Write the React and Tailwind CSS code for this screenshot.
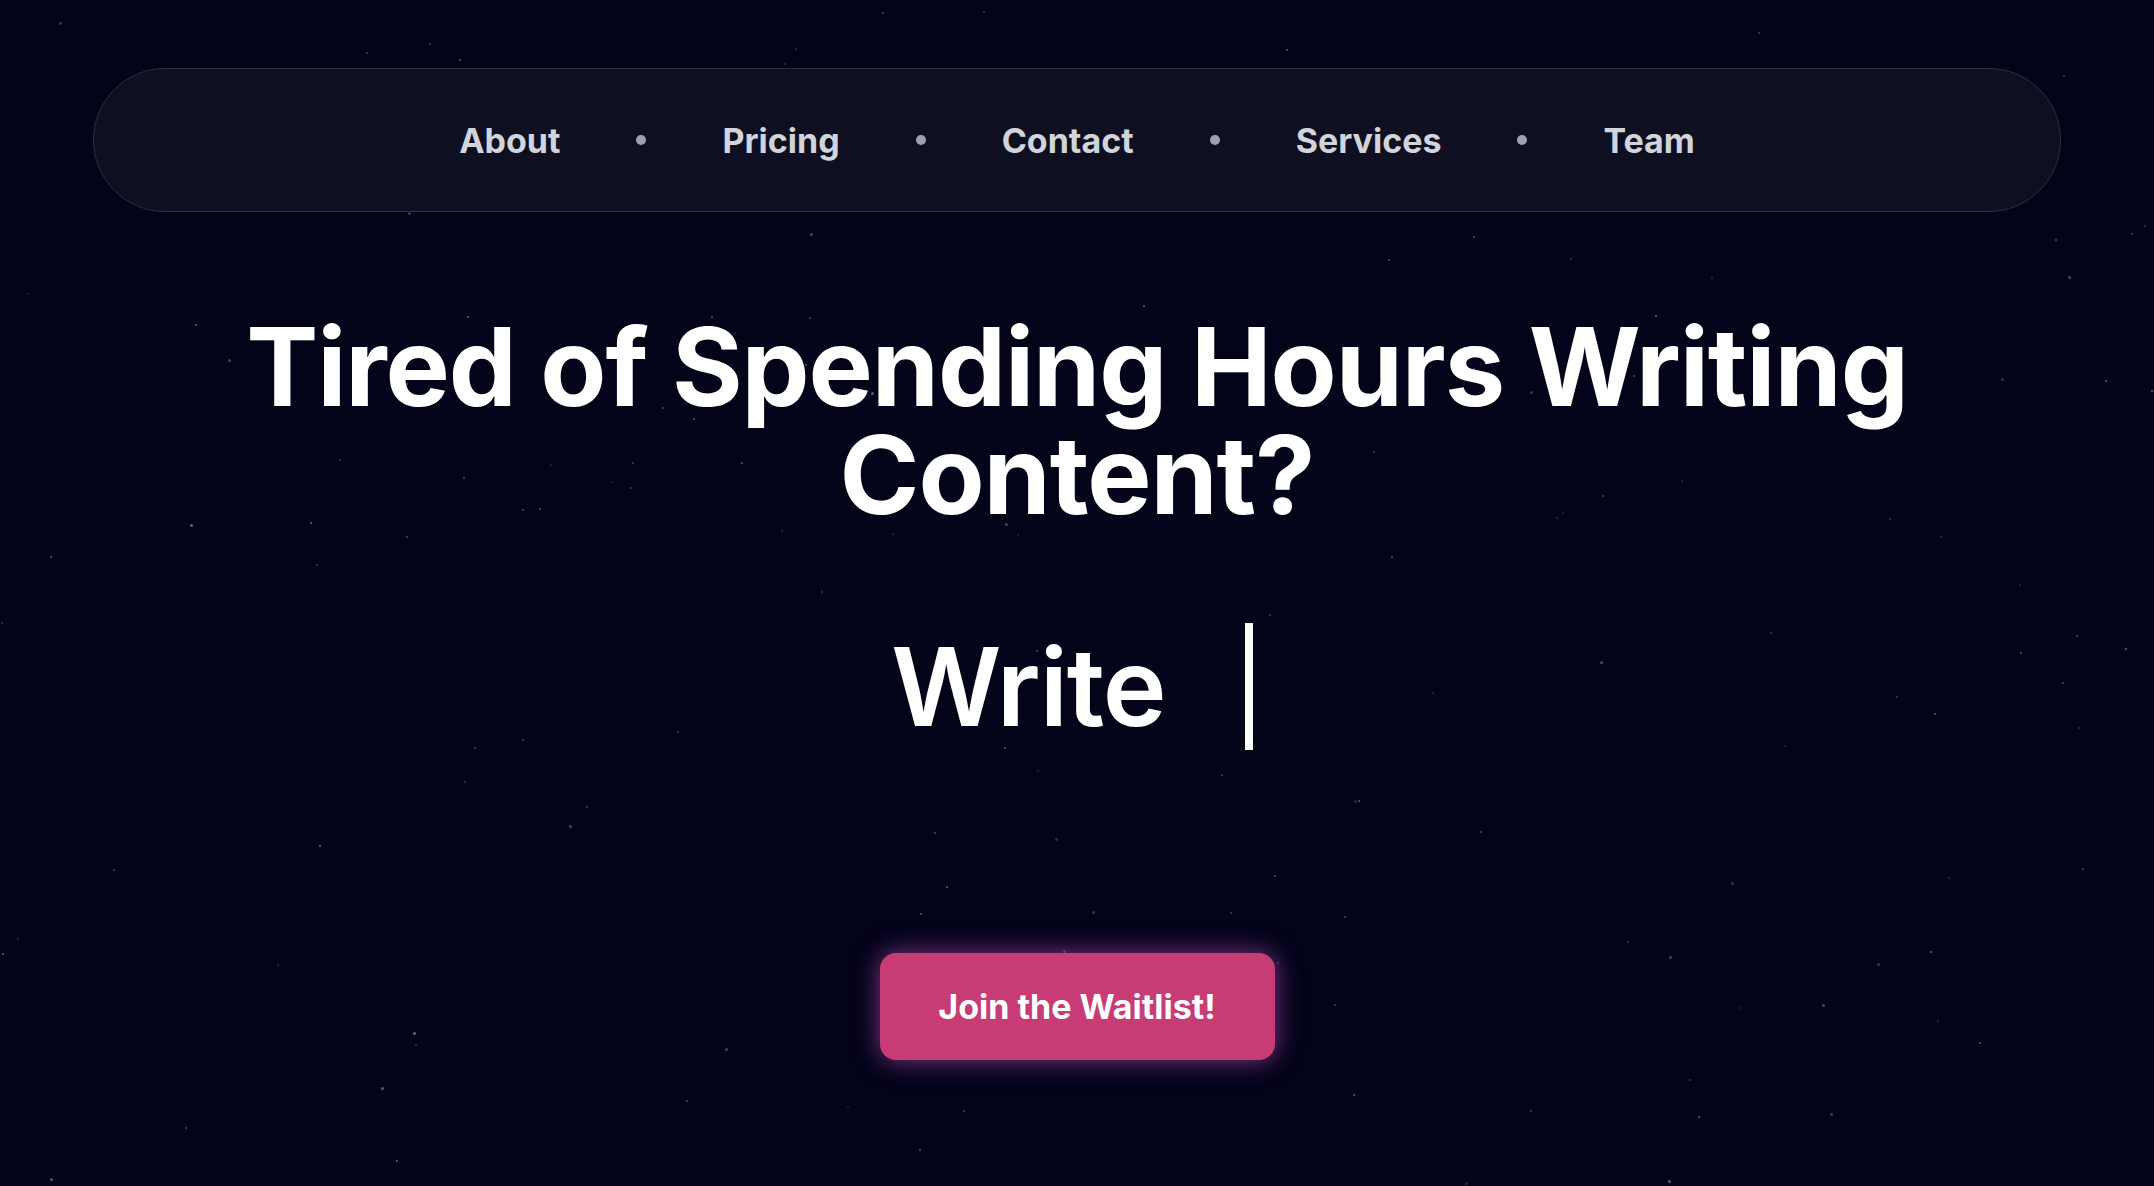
const links = ["About", "Pricing", "Contact", "Services", "Team"];

// deterministic star field
const makeStars = (count) => {
  let seed = 42;
  const rand = () => {
    seed = (seed * 16807) % 2147483647;
    return (seed - 1) / 2147483646;
  };
  return Array.from({ length: count }, () => ({
    left: rand() * 100,
    top: rand() * 100,
    size: rand() < 0.8 ? 2 : 3,
    opacity: 0.2 + rand() * 0.45,
  }));
};

const stars = makeStars(170);

const Navbar = () => (
  <nav className="mx-[93px] mt-[68px] h-[144px] rounded-full border border-[#2c2d40] bg-[#0e0f20] flex items-center justify-center">
    <ul className="flex items-center gap-[76px]">
      {links.map((link, i) => (
        <li key={link} className="flex items-center gap-[76px]">
          {i > 0 && <span className="w-[10px] h-[10px] rounded-full bg-[#9ca3af]" />}
          <a href="#" className="text-[34px] font-bold text-[#d1d5db]">
            {link}
          </a>
        </li>
      ))}
    </ul>
  </nav>
);

const App = () => {
  return (
    <div className="relative min-h-screen overflow-hidden bg-[#03031a] font-['Inter','Noto_Sans',sans-serif]">
      <div className="absolute inset-0 pointer-events-none">
        {stars.map((s, i) => (
          <span
            key={i}
            className="absolute rounded-full bg-[#9aa0b8]"
            style={{ left: `${s.left}%`, top: `${s.top}%`, width: s.size, height: s.size, opacity: s.opacity }}
          />
        ))}
      </div>

      <div className="relative">
        <Navbar />

        <section className="flex flex-col items-center text-center">
          <h1 className="mt-[101px] text-[108px] leading-none font-bold text-white tracking-[-0.01em]">
            Tired of Spending Hours Writing
            <br />
            Content?
          </h1>

          <div className="mt-[94px] mr-[10px] flex items-center gap-[79px] h-[127px]">
            <span className="text-[108px] leading-none font-semibold text-white tracking-[-0.01em]">Write</span>
            <span className="w-[8px] h-[127px] bg-white" />
          </div>

          <button className="mt-[203px] w-[395px] h-[107px] rounded-[16px] bg-[#c83c75] text-white text-[34px] font-bold shadow-[0_0_26px_rgba(214,90,200,0.6)]">
            Join the Waitlist!
          </button>
        </section>
      </div>
    </div>
  );
};

export default App;
